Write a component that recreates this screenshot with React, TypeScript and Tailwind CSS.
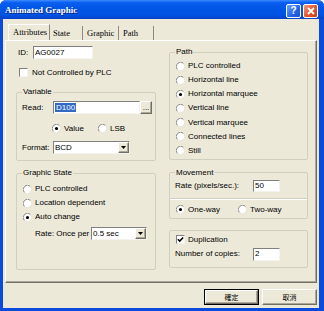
import React from 'react';

// classic XP "Animated Graphic" dialog, scaled down

const sunken =
  'bg-white border border-t-[#7f7f7f] border-l-[#7f7f7f] border-r-[#f4f3ee] border-b-[#f4f3ee]';
const raised =
  'bg-[#ece9d8] border border-t-white border-l-white border-r-[#716f64] border-b-[#716f64] shadow-[inset_-1px_-1px_0_#aca899]';

function Radio({ checked }: { checked?: boolean }) {
  return (
    <svg width="9" height="9" viewBox="0 0 12 12" className="shrink-0">
      <circle cx="6" cy="6" r="5.5" fill="#fff" />
      <path d="M1.9 10.1A5.8 5.8 0 0 1 10.1 1.9" fill="none" stroke="#8a8a86" strokeWidth="1.3" />
      <path d="M10.1 1.9A5.8 5.8 0 0 1 1.9 10.1" fill="none" stroke="#e4e2d6" strokeWidth="1.3" />
      {checked && <circle cx="6" cy="6" r="2.1" fill="#000" />}
    </svg>
  );
}

function Check({ checked }: { checked?: boolean }) {
  return (
    <span className={`w-[9px] h-[9px] shrink-0 flex items-center justify-center ${sunken}`}>
      {checked && (
        <svg width="7" height="7" viewBox="0 0 7 7">
          <path d="M0.8 3.2L2.7 5.1L6.2 1.4" stroke="#000" strokeWidth="1.5" fill="none" />
        </svg>
      )}
    </span>
  );
}

function Field({ className, children }: { className: string; children?: React.ReactNode }) {
  return <div className={`flex items-center pl-[1px] shrink-0 ${sunken} ${className}`}>{children}</div>;
}

function Select({ value, className }: { value: string; className: string }) {
  return (
    <div className={`flex items-stretch shrink-0 ${sunken} ${className}`}>
      <span className="flex-1 flex items-center pl-[1px]">{value}</span>
      <span className={`w-[11px] flex items-center justify-center ${raised}`}>
        <svg width="5" height="3" viewBox="0 0 5 3">
          <path d="M0 0h5L2.5 3z" fill="#000" />
        </svg>
      </span>
    </div>
  );
}

function Group({ label, className, children }: { label: string; className: string; children: React.ReactNode }) {
  return (
    <fieldset className={`border border-[#d0d0bf] rounded-[2px] flex flex-col ${className}`}>
      <legend className="ml-[5px] px-[1px] leading-[10px]">{label}</legend>
      {children}
    </fieldset>
  );
}

function RadioRow({ label, checked, className = '' }: { label: string; checked?: boolean; className?: string }) {
  return (
    <div className={`h-[10px] flex items-center gap-[3px] ${className}`}>
      <Radio checked={checked} />
      <span>{label}</span>
    </div>
  );
}

const TABS = [
  { label: 'Attributes', w: 'w-[42px]', pl: 'pl-[4px]' },
  { label: 'State', w: 'w-[33px]', pl: 'pl-[3px]' },
  { label: 'Graphic', w: 'w-[36px]', pl: 'pl-[4px]' },
  { label: 'Path', w: 'w-[35px]', pl: 'pl-[4px]' },
];

const App: React.FC = () => {
  return (
    <div className="w-[324px] h-[311px] flex flex-col bg-[#0a4bdd] rounded-t-[6px] overflow-hidden font-['Liberation_Sans',Arial,sans-serif] text-[8px] leading-none text-black">
      {/* title bar */}
      <div className="h-[19px] shrink-0 flex items-center pt-[2px] pl-[5px] pr-[6px] gap-[2px] bg-[linear-gradient(#3d8dfd_0%,#0a5ef0_14%,#0056e6_45%,#0052e2_80%,#0541c6_100%)]">
        <span className="flex-1 text-white font-bold text-[9px] font-['Liberation_Serif',serif] [text-shadow:1px_1px_0_#0c2a8c]">
          Animated Graphic
        </span>
        <span className="w-[15px] h-[14px] rounded-[2px] border border-white bg-[linear-gradient(135deg,#6ea2ff,#2462e8_60%,#1c4fd0)] flex items-center justify-center text-white font-bold text-[10px]">
          ?
        </span>
        <span className="w-[15px] h-[14px] rounded-[2px] border border-white bg-[linear-gradient(135deg,#f29a7a,#e0552a_55%,#c8401c)] flex items-center justify-center">
          <svg width="8" height="8" viewBox="0 0 8 8">
            <path d="M1 1L7 7M7 1L1 7" stroke="#fff" strokeWidth="1.8" />
          </svg>
        </span>
      </div>

      {/* client area */}
      <div className="flex-1 ml-[3px] mr-[5px] mb-[3px] bg-[#ece9d8] flex flex-col">
        {/* tabs */}
        <div className="mt-[5px] ml-[5px] h-[16px] flex items-stretch font-['Liberation_Serif',serif] text-[8.5px]">
          {TABS.map((t, i) => (
            <div
              key={t.label}
              className={`${t.w} ${t.pl} flex items-center border-r border-r-[#8c8a80] ${
                i === 0 ? 'border-l border-l-white border-t border-t-white' : 'mt-[2px]'
              }`}
            >
              {t.label}
            </div>
          ))}
        </div>

        {/* tab page */}
        <div className="mx-[2px] h-[243px] flex gap-[13px] pl-[10px] pr-[8px] border-t border-l border-t-white border-l-white border-r border-b border-r-[#716f64] border-b-[#716f64] shadow-[inset_-1px_-1px_0_#aca899]">
          {/* left column */}
          <div className="w-[140px] flex flex-col">
            <div className="mt-[5px] h-[13px] flex items-center">
              <span className="w-[17px] pl-[2px]">ID:</span>
              <Field className="w-[60px] h-[13px]">AG0027</Field>
            </div>
            <div className="mt-[9px] h-[9px] flex items-center gap-[4px] pl-[3px]">
              <Check />
              <span>Not Controlled by PLC</span>
            </div>

            <Group label="Variable" className="mt-[10px] pb-[6px]">
              <div className="mt-[4px] h-[13px] flex items-center">
                <span className="w-[36px] pl-[5px]">Read:</span>
                <Field className="w-[87px] h-[13px]">
                  <span className="bg-[#316ac5] text-white px-[1px] leading-[9px]">D100</span>
                </Field>
                <span className={`w-[12px] h-[13px] flex items-center justify-center ${raised}`}>...</span>
              </div>
              <div className="mt-[10px] h-[9px] flex items-center pl-[35px]">
                <RadioRow label="Value" checked className="w-[46px]" />
                <RadioRow label="LSB" />
              </div>
              <div className="mt-[8px] h-[13px] flex items-center">
                <span className="w-[36px] pl-[5px]">Format:</span>
                <Select value="BCD" className="w-[77px] h-[13px]" />
              </div>
            </Group>

            <Group label="Graphic State" className="mt-[7px] pb-[29px]">
              <div className="mt-[6px] flex flex-col gap-[4px] pl-[6px]">
                <RadioRow label="PLC controlled" />
                <RadioRow label="Location dependent" />
                <RadioRow label="Auto change" checked />
              </div>
              <div className="mt-[5px] h-[13px] flex items-center pl-[18px]">
                <span className="w-[56px]">Rate: Once per</span>
                <Select value="0.5 sec" className="w-[56px] h-[13px]" />
              </div>
            </Group>
          </div>

          {/* right column */}
          <div className="w-[139px] flex flex-col">
            <Group label="Path" className="mt-[6px] pb-[3px]">
              <div className="mt-[4px] flex flex-col gap-[4.17px] pl-[6px]">
                <RadioRow label="PLC controlled" />
                <RadioRow label="Horizontal line" />
                <RadioRow label="Horizontal marquee" checked />
                <RadioRow label="Vertical line" />
                <RadioRow label="Vertical marquee" />
                <RadioRow label="Connected lines" />
                <RadioRow label="Still" />
              </div>
            </Group>

            <Group label="Movement" className="mt-[8px] pb-[3px]">
              <div className="mt-[2px] h-[12px] flex items-center">
                <span className="w-[83px] pl-[5px]">Rate (pixels/sec.):</span>
                <Field className="w-[27px] h-[12px]">50</Field>
              </div>
              <div className="mt-[6px] h-[2px] border-t border-t-[#d0d0bf] border-b border-b-white" />
              <div className="mt-[5px] flex items-center pl-[6px]">
                <RadioRow label="One-way" checked className="w-[62px]" />
                <RadioRow label="Two-way" />
              </div>
            </Group>

            <div className="mt-[11px] pb-[6px] border border-[#d0d0bf] rounded-[2px] flex flex-col">
              <div className="mt-[4px] h-[10px] flex items-center gap-[3px] pl-[6px]">
                <Check checked />
                <span>Duplication</span>
              </div>
              <div className="mt-[3px] h-[13px] flex items-center">
                <span className="w-[83px] pl-[5px]">Number of copies:</span>
                <Field className="w-[27px] h-[13px]">2</Field>
              </div>
            </div>
          </div>
        </div>

        {/* dialog buttons */}
        <div className="mt-[6px] h-[16px] flex justify-end gap-[3px] pr-[2px] font-['Liberation_Sans','Noto_Sans_CJK_TC',sans-serif] text-[7px]">
          <span className="w-[55px] h-full border border-black flex">
            <span className={`flex-1 flex items-center justify-center ${raised}`}>確定</span>
          </span>
          <span className={`w-[55px] h-full flex items-center justify-center ${raised}`}>取消</span>
        </div>
      </div>
    </div>
  );
};

export default App;
